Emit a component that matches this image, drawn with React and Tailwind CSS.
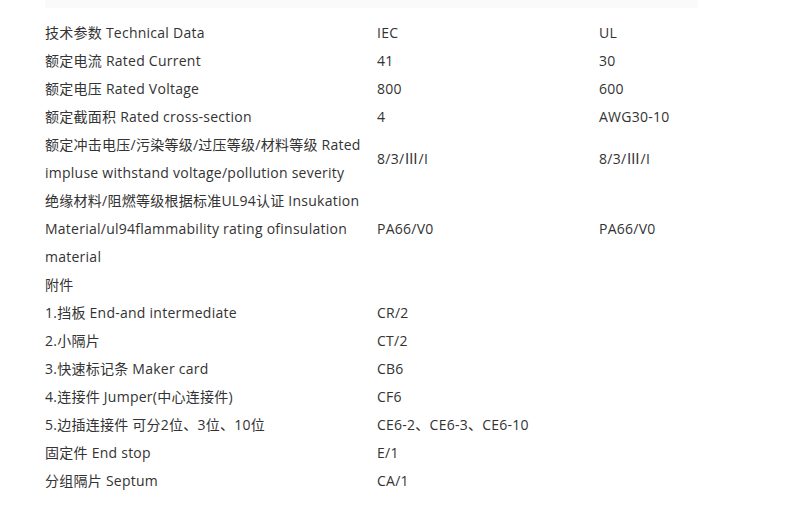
const rows = [
  { a: ['技术参数 Technical Data'], b: 'IEC', c: 'UL' },
  { a: ['额定电流 Rated Current'], b: '41', c: '30' },
  { a: ['额定电压 Rated Voltage'], b: '800', c: '600' },
  { a: ['额定截面积 Rated cross-section'], b: '4', c: 'AWG30-10' },
  {
    a: ['额定冲击电压/污染等级/过压等级/材料等级 Rated', 'impluse withstand voltage/pollution severity'],
    b: '8/3/Ⅲ/I',
    c: '8/3/Ⅲ/I',
  },
  {
    a: ['绝缘材料/阻燃等级根据标准UL94认证 Insukation', 'Material/ul94flammability rating ofinsulation', 'material'],
    b: 'PA66/V0',
    c: 'PA66/V0',
  },
  { a: ['附件'], b: '', c: '' },
  { a: ['1.挡板 End-and intermediate'], b: 'CR/2', c: '' },
  { a: ['2.小隔片'], b: 'CT/2', c: '' },
  { a: ['3.快速标记条 Maker card'], b: 'CB6', c: '' },
  { a: ['4.连接件 Jumper(中心连接件)'], b: 'CF6', c: '' },
  { a: ['5.边插连接件 可分2位、3位、10位'], b: 'CE6-2、CE6-3、CE6-10', c: '' },
  { a: ['固定件 End stop'], b: 'E/1', c: '' },
  { a: ['分组隔片 Septum'], b: 'CA/1', c: '' },
]

export default function App() {
  return (
    <div className="w-[794px] h-[514px] bg-white overflow-hidden text-[#333] text-[14px] leading-[28px] tracking-[0.25px] font-['Open_Sans','Noto_Sans_CJK_SC',sans-serif]">
      <div className="ml-[45px] w-[653px] h-[8px] bg-[#fafafa]"></div>
      <table className="ml-[45px] mt-[11px] w-[653px] table-fixed border-collapse">
        <colgroup>
          <col className="w-[332px]" />
          <col className="w-[222px]" />
          <col />
        </colgroup>
        <tbody>
          {rows.map((r, i) => (
            <tr key={i}>
              <td className="p-0 align-middle whitespace-nowrap">
                {r.a.map((line, j) => (
                  <div key={j}>{line}</div>
                ))}
              </td>
              <td className="p-0 align-middle whitespace-nowrap">{r.b}</td>
              <td className="p-0 align-middle whitespace-nowrap">{r.c}</td>
            </tr>
          ))}
        </tbody>
      </table>
    </div>
  )
}
